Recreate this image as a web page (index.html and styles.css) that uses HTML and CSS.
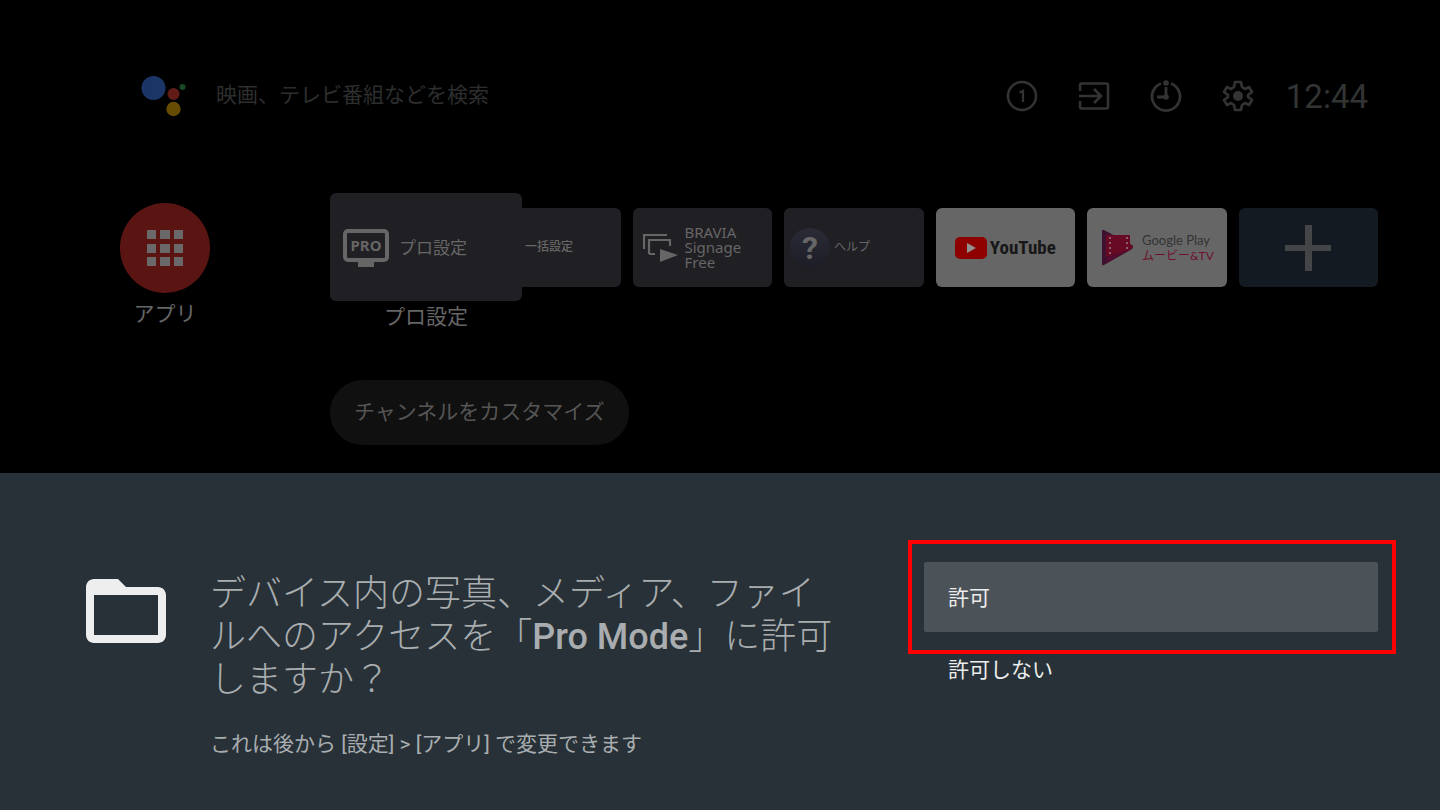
FILE: index.html
```
<!DOCTYPE html>
<html lang="ja">
<head>
	<meta charset="UTF-8">
	<meta name="viewport" content="width=device-width, initial-scale=1">
	<title>ホーム</title>
	<link rel="stylesheet" href="styles.css">
</head>
<body>
	<main class="home">
		<header class="topbar">
			<svg class="assistant" viewBox="0 0 46 42" aria-hidden="true">
				<circle cx="12.500" cy="13" r="12" fill="#1b3666"/>
				<circle cx="32.500" cy="19" r="6" fill="#611c18"/>
				<circle cx="41.500" cy="12" r="3" fill="#174a25"/>
				<circle cx="32.500" cy="34" r="7.200" fill="#664c02"/>
			</svg>
			<input class="search" type="text" aria-label="検索" placeholder="映画、テレビ番組などを検索">
			<nav class="status">
				<button class="icon" aria-label="通知">
					<svg viewBox="0 0 32 32">
						<circle cx="16" cy="16" r="14" fill="none" stroke="currentColor" stroke-width="2.500"/>
						<path d="M13.500 12.500l3.500-1.500v11" fill="none" stroke="currentColor" stroke-width="2.200"/>
					</svg>
				</button>
				<button class="icon" aria-label="入力切換">
					<svg viewBox="0 0 32 32" fill="none" stroke="currentColor" stroke-width="2.600">
						<path d="M2 11V5.500q0-2 2-2h24q2 0 2 2v21q0 2-2 2H4q-2 0-2-2V21"/>
						<path d="M1 16h21M16 9l7 7-7 7"/>
					</svg>
				</button>
				<button class="icon" aria-label="タイマー">
					<svg viewBox="0 0 32 32" fill="none" stroke="currentColor" stroke-width="2.800">
						<path d="M21 3.500a14 14 0 1 1-10 0"/>
						<path d="M16 7v10H7"/>
						<circle cx="16" cy="3" r="2.800" fill="currentColor" stroke="none"/>
						<circle cx="16" cy="17" r="2.800" fill="currentColor" stroke="none"/>
					</svg>
				</button>
				<button class="icon" aria-label="設定">
					<svg viewBox="0 0 32 32">
						<path d="M13 2h6l1 5 3 2 4-2 3 5-4 3v2l4 3-3 5-4-2-3 2-1 5h-6l-1-5-3-2-4 2-3-5 4-3v-2l-4-3 3-5 4 2 3-2z" fill="none" stroke="currentColor" stroke-width="2.600" stroke-linejoin="round"/>
						<circle cx="16" cy="16" r="5" fill="currentColor"/>
					</svg>
				</button>
				<time class="clock">12:44</time>
			</nav>
		</header>

		<div class="apps">
			<div class="all-apps">
				<button class="apps-button" aria-label="アプリ">
					<svg viewBox="0 0 36 36" fill="#6a6868">
						<path d="M0 0h9v9H0zM13 0h10v9H13zM27 0h9v9h-9zM0 14h9v9H0zM13 14h10v9H13zM27 14h9v9h-9zM0 27h9v9H0zM13 27h10v9H13zM27 27h9v9h-9z"/>
					</svg>
				</button>
				<span class="label">アプリ</span>
			</div>
			<div class="main-col">
				<div class="cards">
					<div class="focused">
						<button class="card card-big">
							<svg class="tv" viewBox="0 0 46 38">
								<rect x="2" y="2" width="42" height="29" rx="3" fill="none" stroke="currentColor" stroke-width="4"/>
								<path d="M15 32h16v6H15z" fill="currentColor"/>
								<text x="23" y="22" text-anchor="middle" class="tv-text">PRO</text>
							</svg>
							プロ設定
						</button>
						<span class="label">プロ設定</span>
					</div>
					<div class="row">
						<button class="card card-batch">一括設定</button>
						<button class="card card-signage">
							<svg class="signage" viewBox="0 0 35 28">
								<path d="M1 15V1h23M6 20V6h21v6M6 20h6" fill="none" stroke="currentColor" stroke-width="2.200"/>
								<path d="M17 15l18 6-18 7z" fill="currentColor"/>
							</svg>
							<span>BRAVIA<br>Signage<br>Free</span>
						</button>
						<button class="card card-help">
							<span class="question">?</span>
							ヘルプ
						</button>
						<button class="card card-light card-youtube">
							<svg class="yt" viewBox="0 0 32 22">
								<rect width="32" height="22" rx="5" fill="#8e0000"/>
								<path d="M12 6l9 5-9 5z" fill="#909090"/>
							</svg>
							<span>YouTube</span>
						</button>
						<button class="card card-light card-play">
							<svg class="play" viewBox="0 0 33 37">
								<path d="M1 2q0-2 2-1l28 15q2 2 0 4L3 36q-2 1-2-1z" fill="#3d1230"/>
								<path d="M5 6h24v9l3 3-3 3-24 7z" fill="#680a24"/>
								<path d="M6 28l23-7 2-1L5 34z" fill="#540b30"/>
								<path d="M8 8h2v2H8zM8 13h2v2H8zM8 18h2v2H8zM8 23h2v2H8zM25 8h2v2h-2zM25 13h2v2h-2zM25 18h2v2h-2z" fill="#8a6070"/>
							</svg>
							<span>Google Play<b>ムービー&amp;TV</b></span>
						</button>
						<button class="card card-add" aria-label="アプリを追加">
							<svg class="plus" viewBox="0 0 46 46"><path d="M20 0h7v20h19v6H27v20h-7V26H0v-6h20z" fill="currentColor"/></svg>
						</button>
					</div>
				</div>
				<button class="customize">チャンネルをカスタマイズ</button>
			</div>
		</div>
	</main>

	<section class="permission" role="dialog" aria-labelledby="question">
		<svg class="folder" viewBox="2 4 20 16" aria-hidden="true">
			<path d="M20 6h-8l-2-2H4c-1.100 0-2 .9-2 2v12c0 1.100.9 2 2 2h16c1.100 0 2-.9 2-2V8c0-1.100-.9-2-2-2zm0 12H4V8h16v10z" fill="#eeeeee"/>
		</svg>
		<div class="message">
			<h1 id="question">デバイス内の写真、メディア、ファイルへのアクセスを「<b>Pro Mode</b>」に許可しますか？</h1>
			<p>これは後から [設定] &gt; [アプリ] で変更できます</p>
		</div>
		<div class="options">
			<div class="marked"><button class="option selected">許可</button></div>
			<button class="option">許可しない</button>
		</div>
	</section>
</body>
</html>
```
FILE: styles.css
```
*{
	box-sizing: border-box;
}
body{
	margin: 0;
	min-height: 100vh;
	display: flex;
	flex-direction: column;
	background-color: #000;
	font-family: Roboto, "Noto Sans CJK JP", sans-serif;
	font-size: 21px;
	line-height: 31px;
}
button{
	margin: 0;
	padding: 0;
	border: 0;
	background: none;
	color: inherit;
	font: inherit;
	cursor: pointer;
}
svg{
	display: block;
	flex-shrink: 0;
}

/* home screen behind the dialog */
.home{
	padding: 66px 62px 28px 120px;
}
.topbar{
	display: flex;
	align-items: center;
	height: 60px;
	padding: 0 10px 0 21px;
	color: #323434;
}
.assistant{
	width: 46px;
	height: 42px;
}
.search{
	flex: 1;
	min-width: 0;
	margin-left: 29px;
	padding: 0 0 2px;
	border: 0;
	background: none;
	font: inherit;
	color: #323434;
}
.search::placeholder{
	color: #2d2e2e;
	opacity: 1;
}
.status{
	display: flex;
	align-items: center;
	gap: 40px;
}
.icon svg{
	width: 32px;
	height: 32px;
}
.clock{
	margin-left: -8px;
	font-size: 33px;
}
.apps{
	display: flex;
	gap: 120px;
	margin-top: 67px;
	color: #666;
}
.all-apps{
	display: flex;
	flex-direction: column;
	align-items: center;
	gap: 6px;
	padding-top: 10px;
}
.apps-button{
	display: flex;
	align-items: center;
	justify-content: center;
	width: 90px;
	height: 90px;
	border-radius: 50%;
	background-color: #5a1513;
}
.apps-button svg{
	width: 36px;
	height: 36px;
}
.main-col{
	flex: 1;
}
.cards{
	display: flex;
	align-items: flex-start;
}
.focused{
	display: flex;
	flex-direction: column;
	align-items: center;
	gap: 1px;
	z-index: 1;
	margin-right: -41px;
}
.row{
	flex: 1;
	display: grid;
	grid-template-columns: repeat(6, minmax(0, 1fr));
	gap: 12px;
	padding-top: 15px;
}
.card{
	display: flex;
	align-items: center;
	height: 79px;
	border-radius: 6px;
	background-color: #201f23;
	color: #666;
	font-size: 12px;
	text-align: left;
}
.card-big{
	gap: 10px;
	width: 192px;
	height: 108px;
	padding: 2px 0 0 13px;
	font-size: 17px;
}
.tv{
	width: 46px;
	height: 38px;
}
.tv-text{
	font: bold 15px "Noto Sans", sans-serif;
	fill: currentColor;
}
.card-batch{
	padding-left: 44px;
	font-weight: 500;
}
.card-signage{
	gap: 7px;
	padding-left: 10px;
	font: 15px/15px "Noto Sans", sans-serif;
}
.signage{
	width: 35px;
	height: 28px;
}
.card-help{
	gap: 4px;
	padding-left: 6px;
}
.question{
	width: 40px;
	height: 40px;
	border-radius: 50%;
	background: linear-gradient(#2a2b36, #1c1d27);
	font: bold 32px/40px Roboto, sans-serif;
	text-align: center;
}
.card-light{
	background-color: #666;
}
.card-youtube{
	justify-content: center;
	gap: 3px;
	color: #171717;
	font: bold 19px "Roboto Condensed", "Open Sans Condensed", "Liberation Sans Narrow", Roboto, sans-serif;
}
.yt{
	width: 32px;
	height: 22px;
}
.card-play{
	gap: 8px;
	padding-left: 14px;
	color: #333;
	font: 13px/16px Lato, "Noto Sans CJK JP", sans-serif;
	white-space: nowrap;
}
.card-play b{
	display: block;
	color: #70102c;
	font-size: 12px;
	font-weight: normal;
}
.play{
	width: 33px;
	height: 37px;
}
.card-add{
	justify-content: center;
	background-color: #141a21;
	color: #434547;
}
.plus{
	width: 46px;
	height: 46px;
}
.customize{
	height: 65px;
	margin-top: 47px;
	padding: 0 24px;
	border-radius: 33px;
	background-color: #101010;
	color: #555;
}

/* permission dialog */
.permission{
	display: flex;
	align-items: flex-start;
	flex: 1;
	padding: 89px 62px 50px 86px;
	background-color: #273137;
	color: #eceded;
}
.folder{
	width: 80px;
	height: 64px;
	margin-top: 17px;
}
.message{
	flex: 1;
	margin: 11px 80px 0 44px;
	color: #a9adaf;
}
.message h1{
	margin: 0;
	font-size: 36px;
	font-weight: 300;
	line-height: 43px;
}
.message b{
	font-weight: 500;
}
.message p{
	margin: 27px 0 0;
}
.options{
	display: flex;
	flex-direction: column;
	gap: 2px;
	width: 454px;
}
.option{
	width: 100%;
	height: 70px;
	padding: 2px 24px 0;
	border-radius: 2px;
	text-align: left;
}
.selected{
	background-color: #4b5258;
}
.marked{
	position: relative;
}
.marked::after{
	content: "";
	position: absolute;
	inset: -22px -18px -22px -16px;
	border: 4px solid #f00;
	pointer-events: none;
}
```
